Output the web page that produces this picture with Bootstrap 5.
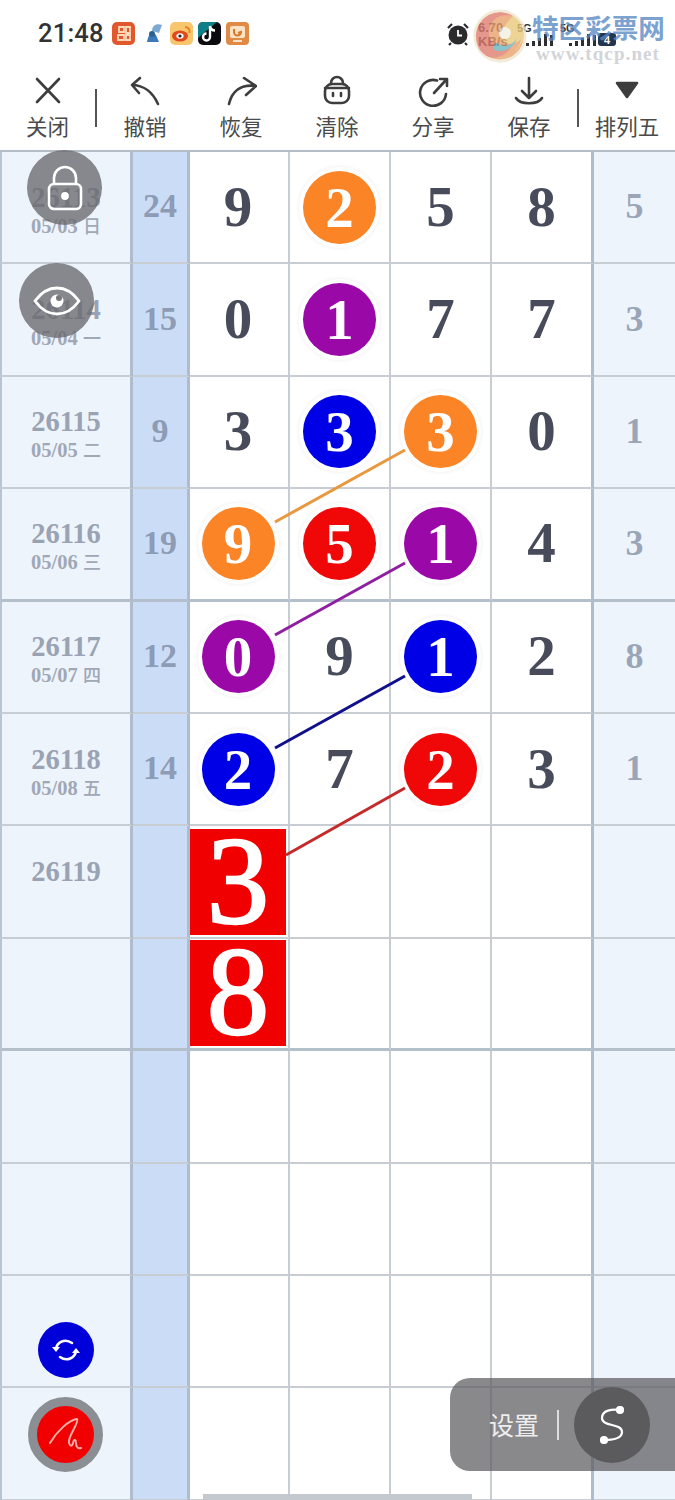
<!DOCTYPE html>
<html lang="zh">
<head>
<meta charset="utf-8">
<title>排列五</title>
<link href="https://cdn.jsdelivr.net/npm/bootstrap@5.3.0/dist/css/bootstrap.min.css" rel="stylesheet">
<style>
body{background:#fff;font-family:"Noto Sans CJK SC","Liberation Sans",sans-serif;color:#444}
.pg{width:675px;height:1500px;overflow:hidden}
.sbar{height:68px;padding:15px 0 0 38px;gap:9px}
.clock{font:500 25.5px/36px Roboto,sans-serif;color:#333;width:65px;letter-spacing:.2px}
.apps{gap:5px;margin-top:7px}
.apps svg:first-child{margin-right:3px}
.tbar{height:82px}
.tool{width:96px;padding-top:7px;font-size:21.5px;line-height:25px;color:#4a4a4a}
.tool.t1{width:95px}
.tool svg{display:block;margin-bottom:6px;fill:none;stroke:#3d3d3d;stroke-width:2.6;stroke-linecap:round;stroke-linejoin:round}
.tsep{width:2px;height:38px;background:#555;margin-top:21px;flex:none}
.wm1{left:532px;top:11px;font:700 26.6px/32px "Noto Sans CJK SC",sans-serif;color:rgba(88,136,196,.8);z-index:1}
.wm2{left:536px;top:43px;font:700 19px/22px "Liberation Serif",serif;color:#d2d4d8;letter-spacing:1.1px}
.sig{font:700 13px/14px "Liberation Sans",sans-serif;color:#333}
.sig2{font-size:11px}
.logo{left:473px;top:9px;opacity:.78}
.gridbox{grid-template-columns:133px 57px 100px 101px 101px 102px 81px;grid-template-rows:repeat(12,112.4px);border-top:2px solid #b4bcc6;font-family:"Liberation Serif",serif;font-weight:700}
.gc{border-right:2px solid #c8cdd4;border-bottom:2px solid #c8cdd4;min-width:0;font-size:57px;line-height:1;color:#484c5a;background:#fff;padding-bottom:2px}
.c-l{background:#eef4fc;border-left:2px solid #b8c4d2;border-right:3px solid #aebccd;font-size:28.5px;color:#9aa3b3;padding:5px 0 0}
.c-i{background:#cbddf6;border-right:3px solid #aebccd;font-size:34px;color:#8e9bb4}
.c-a{padding-right:2px}
.c-r{background:#eef4fc;font-size:36px;color:#9aa6b8;border-right:0}
.c-p{border-right:3px solid #aebccd}
.thick{border-bottom:3px solid #b4bfcc}
.dt{font-size:20.5px;line-height:24px;margin-top:-1px;color:#a0a8b6}
.dt i{font-family:"Noto Sans CJK SC",sans-serif;font-style:normal;font-weight:500;font-size:18px}
.nm{line-height:32px}
.ball{width:73px;height:73px;color:#fff;box-shadow:0 0 0 4px #fff,0 0 4px 4px rgba(0,0,0,.08);z-index:2;margin-top:2px}
.b-o{background:#fb8427}.b-p{background:#9a08a8}.b-b{background:#0000e6}.b-r{background:#f00808}
.sq{width:96px;height:106px;background:#f00000;color:#fff;font-size:124px;font-weight:400;line-height:106px;margin-top:2px;-webkit-text-stroke:2.5px #fff}
.lines{left:0;top:0;z-index:3}
.lockb,.eyeb{width:75px;height:75px;background:rgba(105,105,110,.78);z-index:4}
.lockb{left:27px;top:150px}
.eyeb{left:19px;top:263px}
.sync{left:38px;top:1322px;width:56px;height:56px;background:#0000d8;z-index:4}
.pen{left:28px;top:1397px;width:75px;height:75px;background:#f00000;border:9px solid #8b8f94;z-index:4}
.setp{left:450px;top:1378px;width:225px;height:93px;background:rgba(92,92,96,.72);border-radius:20px 0 0 20px;z-index:4;padding-left:39px;color:#eee;font-size:25px}
.setp u{display:block;width:2px;height:30px;background:#ddd;margin-left:18px}
.setc{left:124px;top:9px;width:76px;height:76px;background:#5b5b5d}
.sbar2{left:203px;top:1494px;width:269px;height:6px;background:#c4c9d0;z-index:4}
</style>
</head>
<body class="m-0">
<div class="pg position-relative">
  <div class="sbar d-flex">
    <div class="clock">21:48</div>
    <div class="apps d-flex">
      <svg width="23" height="23" viewBox="0 0 23 23"><rect width="23" height="23" rx="5" fill="#e0582c"/><path d="M7 5h5v5H7zM14 5h4v6h-4zM6 13h6v5H6zM14 13h4v5h-4z" fill="none" stroke="#fbd9b8" stroke-width="1.8"/></svg>
      <svg width="22" height="23" viewBox="0 0 22 23"><path d="M4 20c1-6 3-9 6-10l3 3 3 7z" fill="#3d78b8"/><path d="M9 9C9 4 13 1 19 3l-3 8z" fill="#7ea9d2"/><circle cx="9" cy="12" r="3" fill="#2c5f96"/></svg>
      <svg width="23" height="23" viewBox="0 0 23 23"><rect width="23" height="23" rx="5" fill="#f7c66e"/><ellipse cx="10" cy="14" rx="8" ry="5.5" fill="#e0481e"/><ellipse cx="10" cy="14" rx="3.6" ry="2.8" fill="#fff"/><circle cx="10" cy="14" r="1.6" fill="#222"/><path d="M15 5c3 0 5 2 4.600 6" fill="none" stroke="#e8861c" stroke-width="2"/></svg>
      <svg width="23" height="23" viewBox="0 0 23 23"><rect width="23" height="23" rx="5" fill="#0b0b0f"/><path d="M0 16V5a5 5 0 0 1 5-5h14z" fill="#0e7f86"/><path d="M12 4v11a3.500 3.500 0 1 1-3.500-3.500M12 4c.5 3 2.500 4.500 5 4.500" fill="none" stroke="#fff" stroke-width="2.400"/></svg>
      <svg width="23" height="23" viewBox="0 0 23 23"><rect width="23" height="23" rx="4" fill="#e08a45"/><rect x="4" y="4" width="15" height="12" rx="2" fill="#fde3c6"/><path d="M8 7v3a3.500 3.500 0 0 0 7 0l-3 1" fill="none" stroke="#d9772a" stroke-width="2"/><rect x="7" y="18" width="9" height="2" fill="#fde3c6"/></svg>
    </div>
  </div>

  <svg class="position-absolute" style="left:446px;top:22px" width="24" height="24" viewBox="0 0 24 24"><circle cx="12" cy="13" r="9.500" fill="#2b2b2e"/><path d="M12 8v5.500h4" fill="none" stroke="#fff" stroke-width="1.800"/><path d="M2 6l4-4M22 6l-4-4M5 21l-2 2M19 21l2 2" stroke="#2b2b2e" stroke-width="2.200"/></svg>
  <div class="sig position-absolute" style="left:478px;top:21px">6.70<br>KB/s</div>
  <div class="sig sig2 position-absolute" style="left:517px;top:21px">5G</div>
  <div class="sig sig2 position-absolute" style="left:560px;top:21px">5G</div>
  <svg class="position-absolute" style="left:520px;top:32px" width="125" height="14" viewBox="0 0 125 14"><path d="M6 14v-3h3v3zM12 14v-5h3v5zM18 14v-8h3v8zM24 14V2h3v12zM30 14V3h3v11zM49 14v-3h3v3zM55 14v-5h3v5zM61 14v-8h3v8zM67 14V2h3v12zM73 14V3h3v11z" fill="#2e2e33"/><rect x="78" y="1" width="18" height="13" rx="3" fill="#233650"/><text x="87" y="12" font-size="11" font-weight="700" text-anchor="middle" fill="#fff" font-family="Liberation Sans">4</text></svg>
  <svg class="logo position-absolute" width="54" height="54" viewBox="0 0 54 54"><circle cx="27" cy="27" r="25" fill="#e8a06c" stroke="#efe6cf" stroke-width="3"/><path d="M3 27A24 24 0 0 1 40 7c-12-3-24 2-24 18 0 10 12 16 24 8-2 10-14 18-24 15C8 45 3 37 3 27z" fill="#df7a6c"/><path d="M40 7c10 6 12 16 10 24-4 10-14 18-26 18 12 0 22-8 24-19-4 5-14 7-18 2-4-6 0-15 10-25z" fill="#e9c878"/><path d="M24 34c6 5 16 3 20-5-2 8-10 14-20 13-4-1-6-5 0-8z" fill="#67b4ba"/><circle cx="32" cy="24" r="6" fill="#f4efe2"/></svg>
  <div class="wm1 position-absolute">特区彩票网</div>
  <div class="wm2 position-absolute">www.tqcp.net</div>

  <div class="tbar d-flex">
    <div class="tool t1 d-flex flex-column align-items-center"><svg width="32" height="32" viewBox="0 0 32 32"><path d="M5 4l22 23M27 4L5 27"/></svg>关闭</div>
    <div class="tsep"></div>
    <div class="tool d-flex flex-column align-items-center"><svg width="32" height="32" viewBox="0 0 32 32"><path d="M11 3L3 10l7 8M3 10c12 0 21 8 26 19"/></svg>撤销</div>
    <div class="tool d-flex flex-column align-items-center"><svg width="32" height="32" viewBox="0 0 32 32"><path d="M19 3l12 8-10 9M31 11C16 9 7 16 4 29"/></svg>恢复</div>
    <div class="tool d-flex flex-column align-items-center"><svg width="32" height="32" viewBox="0 0 32 32"><path d="M10 9V8a6 6 0 0 1 12 0v1"/><rect x="4" y="9" width="24" height="19" rx="7"/><path d="M4 13h24M12 18v3M20 18v3"/></svg>清除</div>
    <div class="tool d-flex flex-column align-items-center"><svg width="32" height="32" viewBox="0 0 32 32"><path d="M20 5.500A13 13 0 1 0 29 19"/><path d="M17 18L29 5M23 4h7v7"/></svg>分享</div>
    <div class="tool d-flex flex-column align-items-center"><svg width="32" height="32" viewBox="0 0 32 32"><path d="M16 3v20M9 16l7 7 7-7M3 23c4 7 22 7 26 0"/></svg>保存</div>
    <div class="tsep"></div>
    <div class="tool d-flex flex-column align-items-center"><svg width="32" height="32" viewBox="0 0 32 32"><path d="M6 8h20l-10 14z" fill="#3d3d3d"/></svg>排列五</div>
  </div>

  <div class="gridbox d-grid position-relative">
    <div class="gc c-l d-flex flex-column align-items-center justify-content-center text-center"><div class="nm">26113</div><div class="dt">05/03 <i>日</i></div></div>
    <div class="gc c-i d-flex align-items-center justify-content-center">24</div>
    <div class="gc c-a d-flex align-items-center justify-content-center">9</div>
    <div class="gc d-flex align-items-center justify-content-center"><span class="ball b-o rounded-circle d-flex align-items-center justify-content-center">2</span></div>
    <div class="gc d-flex align-items-center justify-content-center">5</div>
    <div class="gc c-p d-flex align-items-center justify-content-center">8</div>
    <div class="gc c-r d-flex align-items-center justify-content-center">5</div>

    <div class="gc c-l d-flex flex-column align-items-center justify-content-center text-center"><div class="nm">26114</div><div class="dt">05/04 <i>一</i></div></div>
    <div class="gc c-i d-flex align-items-center justify-content-center">15</div>
    <div class="gc c-a d-flex align-items-center justify-content-center">0</div>
    <div class="gc d-flex align-items-center justify-content-center"><span class="ball b-p rounded-circle d-flex align-items-center justify-content-center">1</span></div>
    <div class="gc d-flex align-items-center justify-content-center">7</div>
    <div class="gc c-p d-flex align-items-center justify-content-center">7</div>
    <div class="gc c-r d-flex align-items-center justify-content-center">3</div>

    <div class="gc c-l d-flex flex-column align-items-center justify-content-center text-center"><div class="nm">26115</div><div class="dt">05/05 <i>二</i></div></div>
    <div class="gc c-i d-flex align-items-center justify-content-center">9</div>
    <div class="gc c-a d-flex align-items-center justify-content-center">3</div>
    <div class="gc d-flex align-items-center justify-content-center"><span class="ball b-b rounded-circle d-flex align-items-center justify-content-center">3</span></div>
    <div class="gc d-flex align-items-center justify-content-center"><span class="ball b-o rounded-circle d-flex align-items-center justify-content-center">3</span></div>
    <div class="gc c-p d-flex align-items-center justify-content-center">0</div>
    <div class="gc c-r d-flex align-items-center justify-content-center">1</div>

    <div class="gc c-l thick d-flex flex-column align-items-center justify-content-center text-center"><div class="nm">26116</div><div class="dt">05/06 <i>三</i></div></div>
    <div class="gc c-i thick d-flex align-items-center justify-content-center">19</div>
    <div class="gc c-a thick d-flex align-items-center justify-content-center"><span class="ball b-o rounded-circle d-flex align-items-center justify-content-center">9</span></div>
    <div class="gc thick d-flex align-items-center justify-content-center"><span class="ball b-r rounded-circle d-flex align-items-center justify-content-center">5</span></div>
    <div class="gc thick d-flex align-items-center justify-content-center"><span class="ball b-p rounded-circle d-flex align-items-center justify-content-center">1</span></div>
    <div class="gc c-p thick d-flex align-items-center justify-content-center">4</div>
    <div class="gc c-r thick d-flex align-items-center justify-content-center">3</div>

    <div class="gc c-l d-flex flex-column align-items-center justify-content-center text-center"><div class="nm">26117</div><div class="dt">05/07 <i>四</i></div></div>
    <div class="gc c-i d-flex align-items-center justify-content-center">12</div>
    <div class="gc c-a d-flex align-items-center justify-content-center"><span class="ball b-p rounded-circle d-flex align-items-center justify-content-center">0</span></div>
    <div class="gc d-flex align-items-center justify-content-center">9</div>
    <div class="gc d-flex align-items-center justify-content-center"><span class="ball b-b rounded-circle d-flex align-items-center justify-content-center">1</span></div>
    <div class="gc c-p d-flex align-items-center justify-content-center">2</div>
    <div class="gc c-r d-flex align-items-center justify-content-center">8</div>

    <div class="gc c-l d-flex flex-column align-items-center justify-content-center text-center"><div class="nm">26118</div><div class="dt">05/08 <i>五</i></div></div>
    <div class="gc c-i d-flex align-items-center justify-content-center">14</div>
    <div class="gc c-a d-flex align-items-center justify-content-center"><span class="ball b-b rounded-circle d-flex align-items-center justify-content-center">2</span></div>
    <div class="gc d-flex align-items-center justify-content-center">7</div>
    <div class="gc d-flex align-items-center justify-content-center"><span class="ball b-r rounded-circle d-flex align-items-center justify-content-center">2</span></div>
    <div class="gc c-p d-flex align-items-center justify-content-center">3</div>
    <div class="gc c-r d-flex align-items-center justify-content-center">1</div>

    <div class="gc c-l d-flex flex-column align-items-center justify-content-center text-center"><div class="nm">26119</div><div class="dt"><i>&nbsp;</i></div></div>
    <div class="gc c-i"></div>
    <div class="gc c-a d-flex align-items-center justify-content-center"><span class="sq d-flex justify-content-center">3</span></div>
    <div class="gc"></div><div class="gc"></div><div class="gc c-p"></div><div class="gc c-r"></div>

    <div class="gc c-l thick"></div>
    <div class="gc c-i thick"></div>
    <div class="gc c-a thick d-flex align-items-center justify-content-center"><span class="sq d-flex justify-content-center">8</span></div>
    <div class="gc thick"></div><div class="gc thick"></div><div class="gc c-p thick"></div><div class="gc c-r thick"></div>

    <div class="gc c-l"></div><div class="gc c-i"></div><div class="gc"></div><div class="gc"></div><div class="gc"></div><div class="gc c-p"></div><div class="gc c-r"></div>
    <div class="gc c-l"></div><div class="gc c-i"></div><div class="gc"></div><div class="gc"></div><div class="gc"></div><div class="gc c-p"></div><div class="gc c-r"></div>
    <div class="gc c-l"></div><div class="gc c-i"></div><div class="gc"></div><div class="gc"></div><div class="gc"></div><div class="gc c-p"></div><div class="gc c-r"></div>
    <div class="gc c-l"></div><div class="gc c-i"></div><div class="gc"></div><div class="gc"></div><div class="gc"></div><div class="gc c-p"></div><div class="gc c-r"></div>
  </div>

  <svg class="lines position-absolute" width="675" height="1500" viewBox="0 0 675 1500" fill="none" stroke-width="3">
    <path d="M275 522L405 450" stroke="#e8983e"/>
    <path d="M275 635L405 563" stroke="#8f1fa0"/>
    <path d="M275 748L405 676" stroke="#10108c"/>
    <path d="M286 855L405 788" stroke="#c42a2a"/>
  </svg>

  <div class="lockb position-absolute rounded-circle d-flex align-items-center justify-content-center">
    <svg width="36" height="46" viewBox="0 0 36 46" fill="none" stroke="#fff" stroke-width="2.600"><path d="M7 19v-6a11 11 0 0 1 22 0v6"/><rect x="2" y="19" width="32" height="25" rx="5"/><circle cx="18" cy="31" r="2.600" fill="#fff"/></svg>
  </div>
  <div class="eyeb position-absolute rounded-circle d-flex align-items-center justify-content-center">
    <svg width="48" height="30" viewBox="0 0 48 30" fill="none" stroke="#fff" stroke-width="2.800"><path d="M2 15C10 4 17 2 24 2s14 2 22 13c-8 11-15 13-22 13S10 26 2 15z"/><circle cx="24" cy="15" r="6.500" fill="#fff" stroke="none"/><circle cx="26" cy="12" r="3" fill="#77777c" stroke="none"/></svg>
  </div>
  <div class="sync position-absolute rounded-circle d-flex align-items-center justify-content-center">
    <svg width="30" height="30" viewBox="0 0 30 30" fill="none" stroke="#fff" stroke-width="2.600" stroke-linecap="round"><path d="M5 14C6 7 14 3 21 8"/><path d="M25 16c-1 7-9 11-16 6"/><path d="M1 12h8l-4 5zM21 18h8l-4-5z" fill="#fff" stroke="none"/></svg>
  </div>
  <div class="pen position-absolute rounded-circle d-flex align-items-center justify-content-center">
    <svg width="38" height="36" viewBox="0 0 38 36" fill="none" stroke="#fbb0a8" stroke-width="2" stroke-linecap="round"><path d="M3 26C10 14 22 3 30 2c3 3-10 18-8 24 1 3 3 4 4 0 1-5 3-3 3 0 0 4 2 6 5 5"/></svg>
  </div>
  <div class="setp position-absolute d-flex align-items-center">设置<u></u>
    <div class="setc position-absolute rounded-circle d-flex align-items-center justify-content-center">
      <svg width="28" height="38" viewBox="0 0 28 38" fill="none" stroke="#fff" stroke-width="2.200"><path d="M22 4c-8-1-18 0-18 8 0 9 20 5 20 14 0 7-10 8-18 8"/><circle cx="22" cy="4" r="3" fill="#fff"/><circle cx="6" cy="34" r="3" fill="#fff"/></svg>
    </div>
  </div>
  <div class="sbar2 position-absolute"></div>
</div>
<script src="https://cdn.jsdelivr.net/npm/bootstrap@5.3.0/dist/js/bootstrap.bundle.min.js"></script>
</body>
</html>
